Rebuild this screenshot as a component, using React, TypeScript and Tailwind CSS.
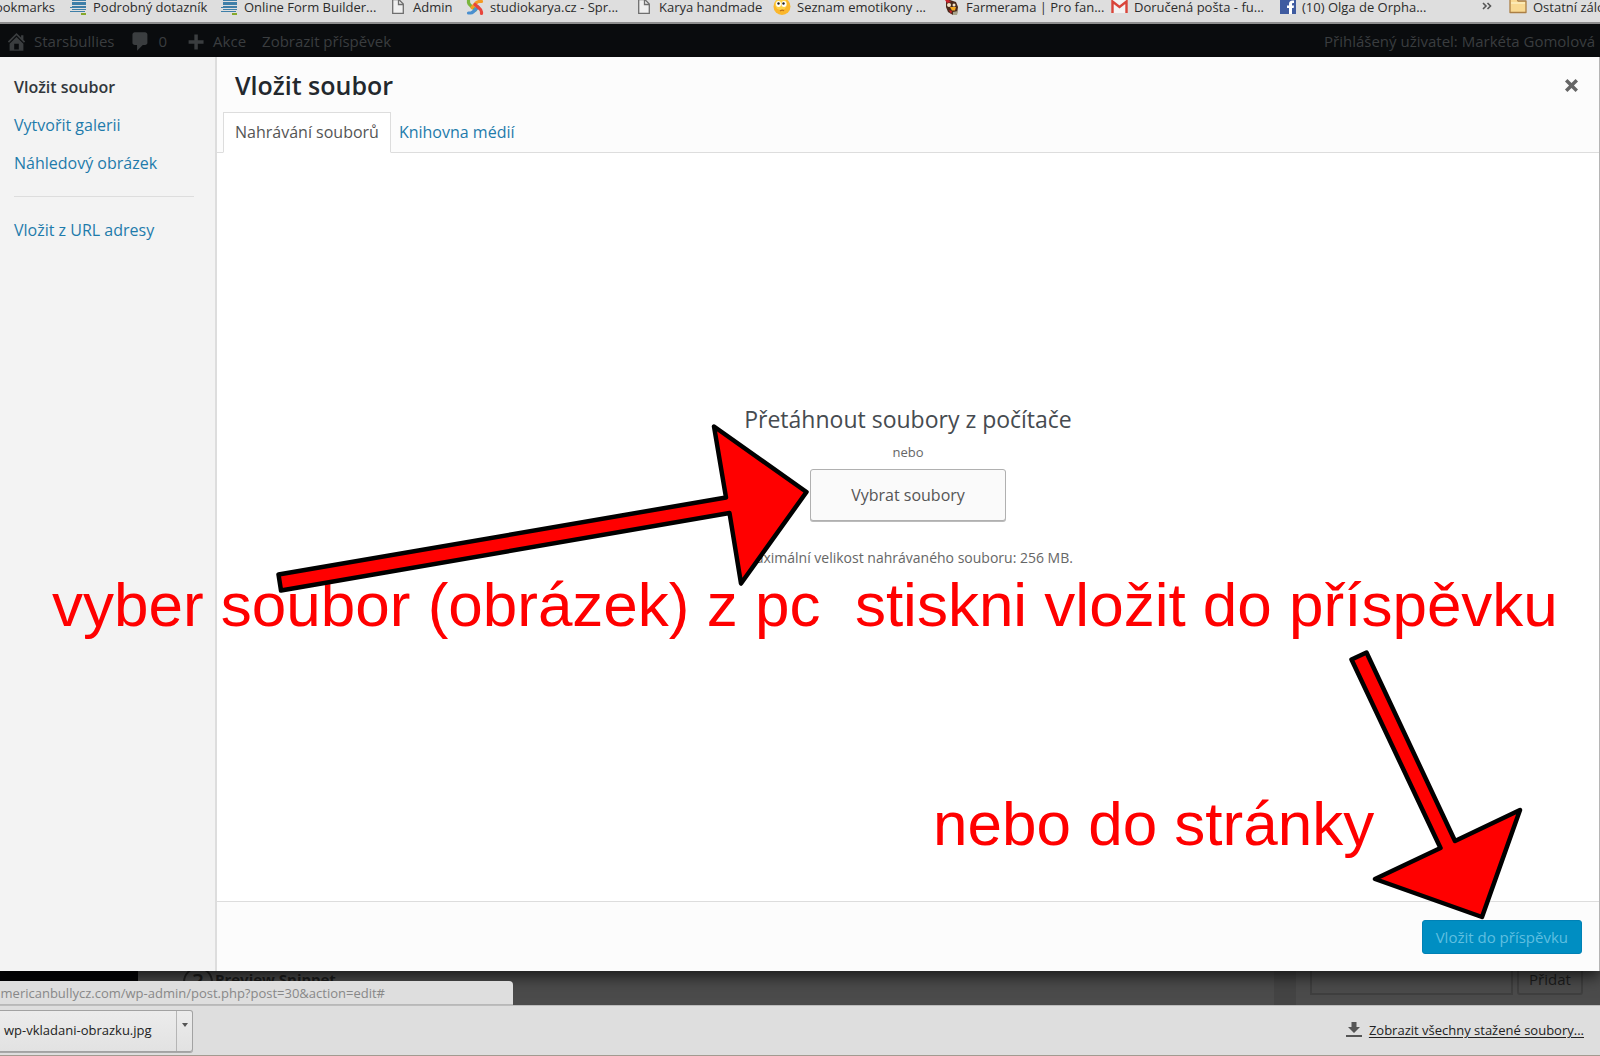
import type { ReactNode } from 'react';

const FormIcon = () => (
  <svg width="17" height="16" viewBox="0 0 17 16" className="shrink-0">
    <g fill="#3f7fa8">
      <rect x="2" y="0" width="14" height="1" />
      <rect x="2" y="2" width="14" height="3" />
      <rect x="2" y="6" width="14" height="2" />
      <rect x="0" y="7" width="14" height="1" />
      <rect x="2" y="9" width="14" height="1" />
      <rect x="0" y="11" width="15" height="1" />
    </g>
    <rect x="11" y="13" width="5" height="2" fill="#86a82a" />
  </svg>
);

const PageIcon = () => (
  <svg width="15" height="16" viewBox="0 0 15 16" className="shrink-0">
    <path d="M.7 -.3H7l4.300 4.300V13.300H.7z" fill="#efefef" stroke="#6e6e6e" strokeWidth="1.300" />
    <path d="M6.500 0v4.500H11" fill="none" stroke="#6e6e6e" strokeWidth="1.300" />
  </svg>
);

const JoomlaIcon = () => (
  <svg width="18" height="16" viewBox="0 0 18 16" className="shrink-0" fill="none" strokeWidth="3.200" strokeLinecap="round">
    <path d="M2.500 .5v2q.5 2 2 3L9.500 10" stroke="#7ab53c" />
    <path d="M15.500 1.500h-2q-2 0-3.500 1.500L6 7.500" stroke="#f49a24" />
    <path d="M2.500 13h2q1.500 0 3-1.500L12 7" stroke="#4a8fd0" />
    <path d="M15.500 13.500v-1.500q0-2-2-3.500L9 4.500" stroke="#e8453c" />
  </svg>
);

const SmileIcon = () => (
  <svg width="18" height="16" viewBox="0 0 18 16" className="shrink-0">
    <circle cx="9" cy="6.500" r="8.500" fill="#fbb72c" />
    <circle cx="8" cy="4" r="6" fill="#fdd34a" />
    <ellipse cx="5.500" cy="4" rx="2.500" ry="3" fill="#fff" />
    <ellipse cx="11" cy="4" rx="2.500" ry="3" fill="#fff" />
    <circle cx="5.500" cy="3.500" r="1.200" fill="#222" />
    <circle cx="10.500" cy="3.500" r="1.200" fill="#222" />
    <path d="M7 11q2-1.500 4-.3" stroke="#c07018" strokeWidth="1.200" fill="none" />
  </svg>
);

const RoosterIcon = () => (
  <svg width="16" height="16" viewBox="0 0 16 16" className="shrink-0">
    <path d="M2 0h4l6 2 2 5-1 7-4 1-5-3-2-5z" fill="#4a2a1c" />
    <path d="M1 0h4l2 2-4 1z" fill="#c8232c" />
    <circle cx="5" cy="5" r="2" fill="#f3e4c8" />
    <circle cx="10" cy="5" r="1.500" fill="#f3e4c8" />
    <path d="M6 7h6l-1 3.500H8z" fill="#f5a81c" />
    <path d="M5 10l3 1-1 3z" fill="#d0202a" />
    <path d="M9 12l5-1-1 4H9z" fill="#a8a48c" />
  </svg>
);

const GmailIcon = () => (
  <svg width="17" height="16" viewBox="0 0 17 16" className="shrink-0">
    <rect x="1" y="0" width="15" height="13" fill="#f3f3f3" />
    <path d="M1.500 13V1.500l7 5.500 7-5.500V13" fill="none" stroke="#d9453a" strokeWidth="2.400" />
  </svg>
);

const FacebookIcon = () => (
  <svg width="16" height="16" viewBox="0 0 16 16" className="shrink-0">
    <rect width="16" height="14" fill="#3f5ba0" />
    <path d="M9 14V8H7V5.500h2V4q0-3.500 3.500-3.500H14V3h-1.200Q12 3 12 4v1.500h2L13.700 8H12v6z" fill="#fff" />
  </svg>
);

const FolderIcon = () => (
  <svg width="18" height="16" viewBox="0 0 18 16" className="shrink-0">
    <path d="M1 12.500V-1h7l1 2h8v11.500z" fill="#f9d992" stroke="#ab7f45" strokeWidth="1.300" strokeLinejoin="round" />
    <path d="M2 3h14" stroke="#fdeebf" strokeWidth="1.500" />
  </svg>
);

const Dashicon = ({ d }: { d: string }) => (
  <svg width="23" height="23" viewBox="0 0 20 20" fill="currentColor" className="shrink-0">
    <path d={d} />
  </svg>
);

const Bookmark = ({ icon, children }: { icon: ReactNode; children: ReactNode }) => (
  <a href="#" className="flex items-start gap-1.5 whitespace-nowrap">
    {icon}
    <span>{children}</span>
  </a>
);

const HOME =
  'M16 8.5l1.53 1.53-1.06 1.06L10 4.6l-6.47 6.49-1.06-1.06L10 2.5l4 4v-2h2v4zm-6-2.46l6 5.99V18H4v-5.97zM12 17v-5H8v5h4z';
const COMMENT =
  'M5 2h9q.82 0 1.41.59T16 4v7q0 .82-.59 1.41T14 13h-2l-5 5v-5H5q-.82 0-1.41-.59T3 11V4q0-.82.59-1.41T5 2z';
const PLUS = 'M17 9v3h-5v5H9v-5H4V9h5V4h3v5h5z';
const CLOSE =
  'M12.12 10l3.53 3.53-2.12 2.12L10 12.12l-3.54 3.54-2.12-2.12L7.88 10 4.34 6.46l2.12-2.12L10 7.88l3.54-3.53 2.12 2.12z';

function BookmarksBar() {
  return (
    <nav
      aria-label="Záložky"
      className="grid h-6 shrink-0 grid-cols-[70px_151px_171px_74px_172px_135px_171px_167px_169px_1fr_27px_91px] items-start overflow-hidden border-b-2 border-[#8e8e8e] bg-[#dedede] text-[13px] leading-[14px] text-[#2c2c2c]"
    >
      <a href="#" className="flex w-[55px] justify-end overflow-hidden">
        Bookmarks
      </a>
      <Bookmark icon={<FormIcon />}>Podrobný dotazník</Bookmark>
      <Bookmark icon={<FormIcon />}>Online Form Builder...</Bookmark>
      <Bookmark icon={<PageIcon />}>Admin</Bookmark>
      <Bookmark icon={<JoomlaIcon />}>studiokarya.cz - Spr...</Bookmark>
      <Bookmark icon={<PageIcon />}>Karya handmade</Bookmark>
      <Bookmark icon={<SmileIcon />}>Seznam emotikony ...</Bookmark>
      <Bookmark icon={<RoosterIcon />}>Farmerama | Pro fan...</Bookmark>
      <Bookmark icon={<GmailIcon />}>Doručená pošta - fu...</Bookmark>
      <Bookmark icon={<FacebookIcon />}>(10) Olga de Orpha...</Bookmark>
      <button type="button" aria-label="Další záložky" className="pt-0.5">
        <svg width="10" height="9" viewBox="0 0 10 9" fill="none" stroke="#555" strokeWidth="1.600">
          <path d="M1 1l3 3-3 3M5.500 1l3 3-3 3" />
        </svg>
      </button>
      <Bookmark icon={<FolderIcon />}>Ostatní záložky</Bookmark>
    </nav>
  );
}

function AdminBar() {
  return (
    <div className="flex h-[33px] shrink-0 items-center bg-[#0a0c0e] px-[5px] pt-0.5 text-[15px] text-[#3b3e40]">
      <a href="#" className="flex items-center gap-1.5">
        <Dashicon d={HOME} />
        Starsbullies
      </a>
      <a href="#" className="ml-3.5 flex items-center gap-[7px]" aria-label="Komentáře">
        <Dashicon d={COMMENT} />0
      </a>
      <a href="#" className="ml-[17px] flex items-center gap-1.5">
        <Dashicon d={PLUS} />
        Akce
      </a>
      <a href="#" className="ml-4">
        Zobrazit příspěvek
      </a>
      <span className="ml-auto">Přihlášený uživatel: Markéta Gomolová</span>
    </div>
  );
}

function MediaModal() {
  return (
    <div role="dialog" aria-label="Vložit soubor" className="relative z-10 flex flex-1 border-r border-[#b5b5b5] bg-white shadow-[0_5px_15px_rgba(0,0,0,0.7)]">
      <aside className="flex w-[217px] shrink-0 flex-col items-start gap-4 border-r-2 border-[#dddddd] bg-[#f3f3f3] px-3.5 pt-[19px] text-[16px] leading-[22px] text-[#1e7bab]">
        <a href="#" className="font-semibold text-[#32373c]">
          Vložit soubor
        </a>
        <a href="#">Vytvořit galerii</a>
        <a href="#">Náhledový obrázek</a>
        <hr className="my-1.5 w-[180px] border-[#dddddd]" />
        <a href="#">Vložit z URL adresy</a>
      </aside>

      <div className="flex min-w-0 flex-1 flex-col">
        <header className="border-b border-[#dddddd] bg-[#fcfcfc]">
          <div className="flex h-[55px] items-center justify-between pt-0.5 pr-4 pl-[18px]">
            <h1 className="text-[25px] font-semibold text-[#23282d]">Vložit soubor</h1>
            <button type="button" aria-label="Zavřít" className="text-[#666666]">
              <Dashicon d={CLOSE} />
            </button>
          </div>
          <div role="tablist" className="-mb-px flex pl-1.5 text-[16px] leading-[22px]">
            <button type="button" role="tab" aria-selected="true" className="border border-[#dddddd] border-b-white bg-white px-[11px] pt-2 pb-[9px] text-[#555555]">
              Nahrávání souborů
            </button>
            <button type="button" role="tab" aria-selected="false" className="px-2 pt-2 pb-2.5 text-[#1e7bab]">
              Knihovna médií
            </button>
          </div>
        </header>

        <main className="flex flex-1 flex-col items-center justify-center pb-[83px] text-[#555555]">
          <h2 className="text-[23px] leading-8 text-[#464b50]">Přetáhnout soubory z počítače</h2>
          <p className="mt-[7px] text-[13px] leading-5 text-[#666666]">nebo</p>
          <button
            type="button"
            className="mt-[7px] h-[52px] rounded-[3px] border border-[#b0b0b0] bg-[#fafafa] px-10 text-[16px] text-[#555555] shadow-[0_1px_0_#bbbbbb]"
          >
            Vybrat soubory
          </button>
          <p className="mt-[27px] text-[14px] leading-5 text-[#666666]">Maximální velikost nahrávaného souboru: 256 MB.</p>
        </main>

        <footer className="flex h-[70px] items-center justify-end border-t border-[#dddddd] bg-[#fcfcfc] pt-px pr-[17px]">
          <button type="button" className="h-[34px] rounded-[3px] border border-[#0081b5] bg-[#008ec2] px-[13px] text-[15px] text-[#5fbfe0]">
            Vložit do příspěvku
          </button>
        </footer>
      </div>
    </div>
  );
}

function DimmedPage() {
  return (
    <div className="relative h-[34px] shrink-0">
      <div className="flex h-full overflow-hidden bg-[#4b4b4b] text-[#1c1c1c]">
        <div className="w-[138px] shrink-0 bg-[#030305]" />
        <div className="flex flex-1 items-start gap-0.5 pl-[45px] text-[15px] leading-4 font-bold">
          <span className="-mt-1 flex size-[30px] items-center justify-center rounded-full border-2 border-[#222222] pb-0.5 text-[22px] font-semibold">?</span>
          <span>Preview Snippet</span>
        </div>
        <div className="w-[22px] bg-[#444444]" />
        <div className="-mt-3 flex h-9 w-[304px] gap-1 pl-3.5">
          <input aria-label="Nový štítek" className="w-[203px] border-2 border-[#3f3f3f] bg-[#4b4b4b]" />
          <button type="button" className="w-[66px] rounded-[3px] border-2 border-[#3f3f3f] bg-[#4b4b4b] pt-1 text-[15px]">
            Přidat
          </button>
        </div>
      </div>
      <div className="absolute bottom-0 left-0 z-20 flex h-6 w-[513px] items-center overflow-hidden rounded-tr-[4px] border-b border-[#b8b8b8] bg-[#dedede] pt-0.5">
        <span className="flex w-[385px] justify-end text-[13px] whitespace-nowrap text-[#888888]">
          americanbullycz.com/wp-admin/post.php?post=30&amp;action=edit#
        </span>
      </div>
    </div>
  );
}

function DownloadBar() {
  return (
    <div className="flex h-[51px] shrink-0 items-center justify-between border-t border-b border-t-[#bdbdbd] border-b-[#a39a90] bg-[#dedede] pr-4 text-[13px] text-[#222222]">
      <div className="flex h-[42px] rounded-r-[3px] border border-l-0 border-[#a2a2a2] bg-linear-to-b from-[#ececec] to-[#e2e2e2] shadow-[0_1px_0_#a8a8a8]">
        <button type="button" className="w-[176px] pl-1 text-left">
          wp-vkladani-obrazku.jpg
        </button>
        <button type="button" aria-label="Možnosti" className="flex w-4 items-start justify-center border-l border-[#b5b5b5] pt-3">
          <svg width="6" height="4" viewBox="0 0 6 4">
            <path d="M0 0h6L3 4z" fill="#555" />
          </svg>
        </button>
      </div>
      <a href="#" className="flex items-center gap-[7px]">
        <svg width="16" height="18" viewBox="0 0 16 18" fill="#555">
          <path d="M5.500 0h5v5H14l-6 6-6-6h3.500zM0 13h16v2H0z" />
        </svg>
        <span className="underline underline-offset-2">Zobrazit všechny stažené soubory...</span>
      </a>
    </div>
  );
}

function Annotations() {
  return (
    <div className="pointer-events-none absolute top-0 left-0 z-30 font-['Liberation_Sans',sans-serif] text-[62px] leading-[70px] whitespace-pre text-[#ff0000]">
      <p className="absolute top-[570px] left-[52px]">vyber soubor (obrázek) z pc{'  '}stiskni vložit do příspěvku</p>
      <p className="absolute top-[789px] left-[933px]">nebo do stránky</p>
      <svg
        width="1600"
        height="1056"
        viewBox="0 0 1600 1056"
        className="absolute top-0 left-0 max-w-none"
        fill="#ff0000"
        stroke="#000"
        strokeWidth="4.500"
        strokeLinejoin="round"
      >
        <path d="M278.500 574.500L726 497.500L714 426.500L806.500 492L741 583.500L729.500 513L281 590.500z" />
        <path d="M1351.500 659.500L1366.500 652.500L1455 841L1520 810L1482 917L1375 879L1440.500 848z" />
      </svg>
    </div>
  );
}

export default function App() {
  return (
    <div className="relative flex min-h-screen flex-col overflow-hidden bg-[#4b4b4b] font-['Open_Sans',sans-serif]">
      <BookmarksBar />
      <AdminBar />
      <MediaModal />
      <DimmedPage />
      <DownloadBar />
      <Annotations />
    </div>
  );
}
